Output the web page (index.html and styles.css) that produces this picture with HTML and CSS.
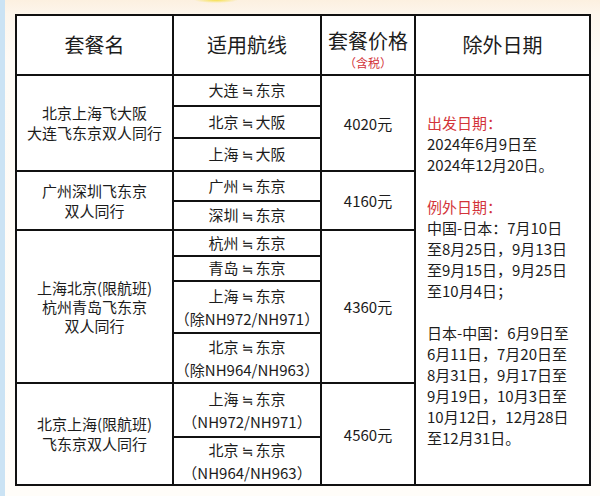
FILE: index.html
```html
<!DOCTYPE html>
<html lang="zh-CN">
<head>
<meta charset="utf-8">
<title>套餐</title>
<link rel="stylesheet" href="styles.css">
</head>
<body>
<div class="page">
<table class="pkg">
<colgroup><col class="c1"><col class="c2"><col class="c3"><col class="c4"></colgroup>
<thead>
<tr class="rh">
<th>套餐名</th>
<th>适用航线</th>
<th class="price-th"><div class="price-h">套餐价格</div><div class="tax">（含税）</div></th>
<th>除外日期</th>
</tr>
</thead>
<tbody>
<tr class="r1">
<td rowspan="3" class="name l20">北京上海飞大阪<br>大连飞东京双人同行</td>
<td>大连<span class="eq">≒</span>东京</td>
<td rowspan="3">4020元</td>
<td rowspan="11" class="dates"><span class="red">出发日期：</span><br>2024年6月9日至<br>2024年12月20日。<br><br><span class="red">例外日期：</span><br>中国-日本：7月10日<br>至8月25日，9月13日<br>至9月15日，9月25日<br>至10月4日；<br><br>日本-中国：6月9日至<br>6月11日，7月20日至<br>8月31日，9月17日至<br>9月19日，10月3日至<br>10月12日，12月28日<br>至12月31日。</td>
</tr>
<tr class="r2"><td>北京<span class="eq">≒</span>大阪</td></tr>
<tr class="r3"><td>上海<span class="eq">≒</span>大阪</td></tr>
<tr class="r4">
<td rowspan="2" class="name l20">广州深圳飞东京<br>双人同行</td>
<td>广州<span class="eq">≒</span>东京</td>
<td rowspan="2">4160元</td>
</tr>
<tr class="r5"><td>深圳<span class="eq">≒</span>东京</td></tr>
<tr class="r6">
<td rowspan="4" class="name l19">上海北京(限航班)<br>杭州青岛飞东京<br>双人同行</td>
<td>杭州<span class="eq">≒</span>东京</td>
<td rowspan="4">4360元</td>
</tr>
<tr class="r7"><td>青岛<span class="eq">≒</span>东京</td></tr>
<tr class="r8"><td>上海<span class="eq">≒</span>东京<br>（除NH972/NH971）</td></tr>
<tr class="r9"><td>北京<span class="eq">≒</span>东京<br>（除NH964/NH963）</td></tr>
<tr class="r10">
<td rowspan="2" class="name l20">北京上海(限航班)<br>飞东京双人同行</td>
<td>上海<span class="eq">≒</span>东京<br>（NH972/NH971）</td>
<td rowspan="2">4560元</td>
</tr>
<tr class="r11"><td>北京<span class="eq">≒</span>东京<br>（NH964/NH963）</td></tr>
</tbody>
</table>
</div>
</body>
</html>
```

FILE: styles.css
```css
html, body {
  margin: 0;
  padding: 0;
}
body {
  width: 600px;
  height: 496px;
  box-sizing: border-box;
  border-left: 5px solid #cbe3f4;
  background:
    radial-gradient(ellipse 22px 3px at 216px 0, #f6e04a 0%, rgba(246, 224, 74, 0) 100%),
    linear-gradient(#fcf0e0 0, #fdf6ec 14px, #fefbf6 60px, #fffdf9 100%);
  font-family: "Noto Sans CJK SC", "Noto Sans", sans-serif;
  color: #1c1c1c;
  overflow: hidden;
}
.page {
  padding: 14px 0 0 10px;
}
.pkg {
  border-collapse: collapse;
  table-layout: fixed;
  width: 576px;
  background: #fff;
  border: 2px solid #111;
}
.c1 { width: 157px; }
.c2 { width: 148px; }
.c3 { width: 94px; }
.c4 { width: 175px; }
.pkg th,
.pkg td {
  border: 2px solid #111;
  padding: 0;
  text-align: center;
  vertical-align: middle;
  font-size: 15px;
  line-height: 21px;
  white-space: nowrap;
}
.pkg th {
  font-weight: normal;
  font-size: 20px;
  line-height: 24px;
}
.pkg th.price-th {
  vertical-align: top;
  padding-top: 14px;
}
.price-h {
  line-height: 22px;
}
.tax {
  color: #d3343a;
  font-size: 12px;
  line-height: 14px;
  margin-top: 4px;
}
.eq {
  font-family: "DejaVu Sans", sans-serif;
  font-size: 14px;
  margin: 0 2px 0 3px;
}
.name.l20 { line-height: 20px; }
.name.l19 { line-height: 19px; }
.pkg td.dates {
  text-align: left;
  vertical-align: top;
  padding: 36px 0 0 11px;
}
.red { color: #d3343a; }
.rh { height: 60px; }
.r1 { height: 31px; }
.r2 { height: 32px; }
.r3 { height: 33px; }
.r4 { height: 30px; }
.r5 { height: 29px; }
.r6 { height: 26px; }
.r7 { height: 25px; }
.r8 { height: 52px; }
.r9 { height: 50px; }
.r10 { height: 54px; }
.r11 { height: 48px; }
```
